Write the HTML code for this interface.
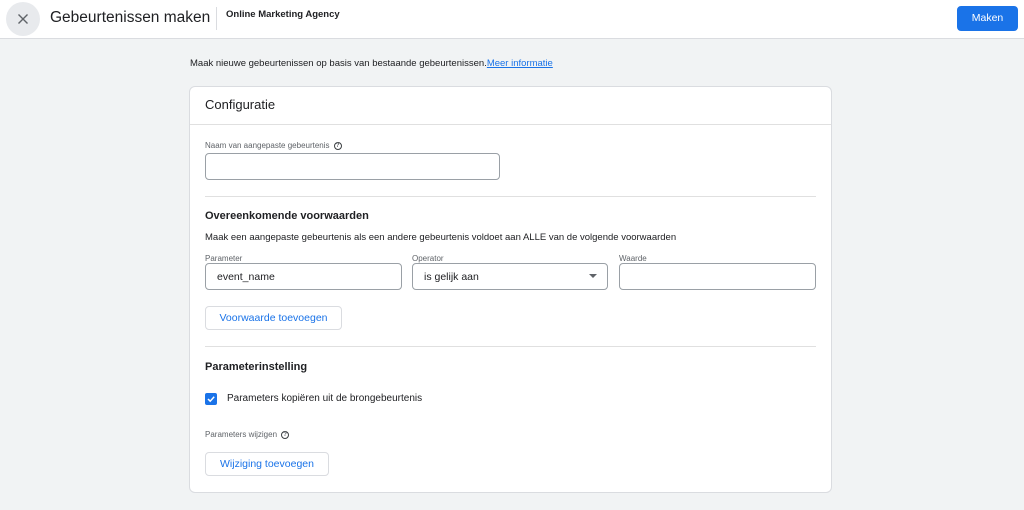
<!DOCTYPE html>
<html><head><style>
*{margin:0;padding:0;box-sizing:border-box}
body{width:1024px;height:510px;background:#f1f3f4;font-family:"Liberation Sans",Arial,sans-serif;position:relative;overflow:hidden;color:#3c4043}
.a{position:absolute;white-space:nowrap}
.inp{position:absolute;border:1px solid #9aa0a6;border-radius:4px;background:#fff;font-size:10.5px;color:#202124;padding-left:11px;line-height:26px}
.btn{position:absolute;border:1px solid #dadce0;border-radius:4px;background:#fff;color:#1a73e8;font-size:10.5px;text-align:center;line-height:23px}
.hr{position:absolute;height:1px;background:#e0e0e0;left:205px;width:611px}
.q{display:inline-block;width:8px;height:8px;border:1px solid #3c4043;border-radius:50%;font-size:6px;line-height:6px;text-align:center;font-weight:bold;vertical-align:middle;margin-left:4px}
</style></head><body>
<div class="a" style="left:0;top:0;width:1024px;height:39px;background:#fff;border-bottom:1px solid #dadce0"></div>
<div class="a" style="left:6px;top:2px;width:34px;height:34px;border-radius:50%;background:#e8eaed"></div>
<svg class="a" style="left:17px;top:13px" width="12" height="12" viewBox="0 0 12 12"><path d="M1.5 1.5L10.5 10.5M10.5 1.5L1.5 10.5" stroke="#5f6368" stroke-width="1.4"/></svg>
<div class="a" style="left:50px;top:9px;font-size:15.5px;color:#202124">Gebeurtenissen maken</div>
<div class="a" style="left:216px;top:7px;width:1px;height:23px;background:#dadce0"></div>
<div class="a" style="left:226px;top:9px;font-size:9.5px;font-weight:bold;color:#202124">Online Marketing Agency</div>
<div class="a" style="left:957px;top:6px;width:61px;height:25px;background:#1a73e8;border-radius:4px;color:#fff;font-size:10.5px;text-align:center;line-height:25px">Maken</div>
<div class="a" style="left:190px;top:58px;font-size:9.5px;color:#202124">Maak nieuwe gebeurtenissen op basis van bestaande gebeurtenissen.<span style="color:#1a73e8;text-decoration:underline">Meer informatie</span></div>
<div class="a" style="left:189px;top:86px;width:643px;height:407px;background:#fff;border:1px solid #dadce0;border-radius:6px"></div>
<div class="a" style="left:205px;top:97px;font-size:13px;color:#202124">Configuratie</div>
<div class="a" style="left:190px;top:124px;width:641px;height:1px;background:#e0e0e0"></div>
<div class="a" style="left:205px;top:141px;font-size:8px;color:#5f6368">Naam van aangepaste gebeurtenis<span class="q">?</span></div>
<div class="inp" style="left:205px;top:153px;width:295px;height:27px"></div>
<div class="hr" style="top:196px"></div>
<div class="a" style="left:205px;top:210px;font-size:11px;font-weight:bold;color:#202124">Overeenkomende voorwaarden</div>
<div class="a" style="left:205px;top:232px;font-size:9.5px;color:#202124">Maak een aangepaste gebeurtenis als een andere gebeurtenis voldoet aan ALLE van de volgende voorwaarden</div>
<div class="a" style="left:205px;top:254px;font-size:8px;color:#5f6368">Parameter</div>
<div class="a" style="left:412px;top:254px;font-size:8px;color:#5f6368">Operator</div>
<div class="a" style="left:619px;top:254px;font-size:8px;color:#5f6368">Waarde</div>
<div class="inp" style="left:205px;top:263px;width:197px;height:27px">event_name</div>
<div class="inp" style="left:412px;top:263px;width:196px;height:27px">is gelijk aan</div>
<svg class="a" style="left:589px;top:274px" width="8" height="5"><path d="M0 0H8L4 4Z" fill="#5f6368"/></svg>
<div class="inp" style="left:619px;top:263px;width:197px;height:27px"></div>
<div class="btn" style="left:205px;top:306px;width:137px;height:24px">Voorwaarde toevoegen</div>
<div class="hr" style="top:346px"></div>
<div class="a" style="left:205px;top:361px;font-size:11px;font-weight:bold;color:#202124">Parameterinstelling</div>
<div class="a" style="left:205px;top:393px;width:12px;height:12px;background:#1a73e8;border-radius:2px"></div>
<svg class="a" style="left:206px;top:394px" width="10" height="10"><path d="M2 5L4.2 7.2L8.2 2.8" stroke="#fff" stroke-width="1.5" fill="none"/></svg>
<div class="a" style="left:227px;top:393px;font-size:10px;color:#202124">Parameters kopiëren uit de brongebeurtenis</div>
<div class="a" style="left:205px;top:430px;font-size:8px;color:#5f6368">Parameters wijzigen<span class="q">?</span></div>
<div class="btn" style="left:205px;top:452px;width:124px;height:24px">Wijziging toevoegen</div>
</body></html>
